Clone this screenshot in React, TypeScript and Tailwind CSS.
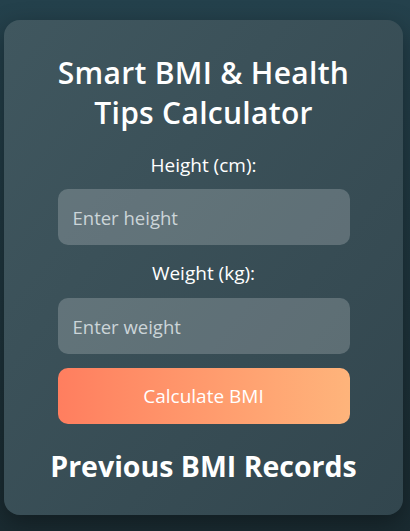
export default function App() {
  return (
    <div className="min-h-[531px] w-full bg-gradient-to-b from-[#24414c] to-[#1a2b31] pt-[20px] pb-[16px] font-['Open_Sans',sans-serif]">
      {/* card */}
      <div className="ml-[4px] w-[399px] rounded-2xl bg-gradient-to-br from-[#40575f] to-[#32464e] px-[20px] pt-[33px] pb-[31px] text-center text-white shadow-[0_8px_24px_rgba(0,0,0,0.35)]">
        <h2 className="text-[30px] font-semibold leading-[40px] tracking-[0.3px]">
          Smart BMI &amp; Health
          <br />
          Tips Calculator
        </h2>

        <label className="mt-[19px] block text-[19px] font-medium leading-[26px]">Height (cm):</label>
        <input
          type="number"
          placeholder="Enter height"
          className="mx-auto mt-[11px] block h-[56px] w-[292px] rounded-[10px] bg-white/20 px-[15px] text-[18.5px] text-white outline-none placeholder:text-[#ccd5d8]"
        />

        <label className="mt-[15px] block text-[19px] font-medium leading-[26px]">Weight (kg):</label>
        <input
          type="number"
          placeholder="Enter weight"
          className="mx-auto mt-[12px] block h-[56px] w-[292px] rounded-[10px] bg-white/20 px-[15px] text-[18.5px] text-white outline-none placeholder:text-[#ccd5d8]"
        />

        <button className="mx-auto mt-[14px] block h-[56px] w-[292px] rounded-[10px] bg-gradient-to-r from-[#ff7e5f] to-[#feb47b] text-[19px] text-white">
          Calculate BMI
        </button>

        <h3 className="mt-[24px] text-[28.5px] font-bold leading-[36px]">Previous BMI Records</h3>
      </div>
    </div>
  );
}
